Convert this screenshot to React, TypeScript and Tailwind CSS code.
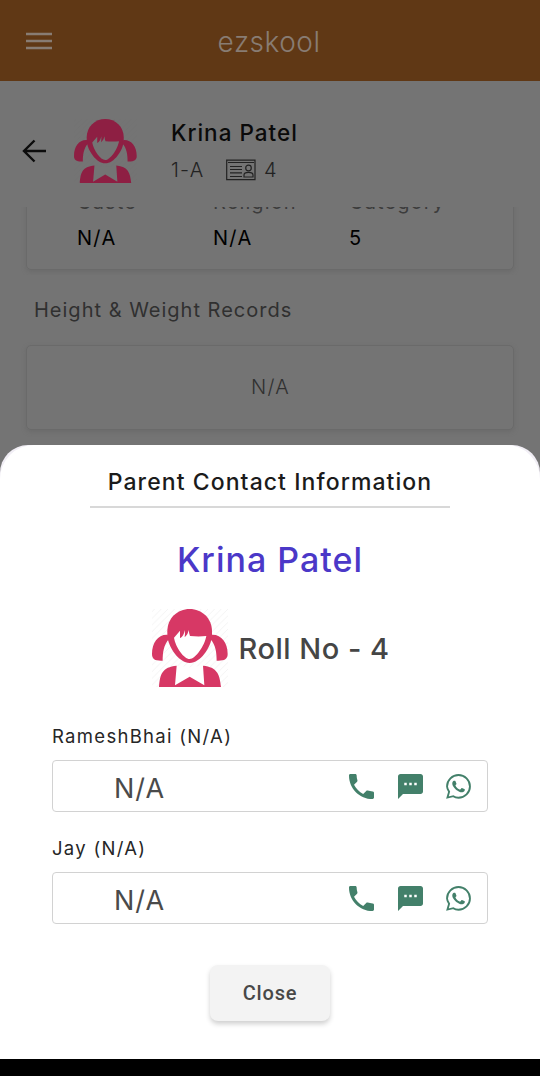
import React from "react";

function Girl({ className, color, paper, stripe }: { className: string; color: string; paper: string; stripe: string }) {
  const id = "hatch" + color.slice(1);
  return (
    <svg viewBox="35 237 228 234" preserveAspectRatio="none" className={className}>
      <defs>
        <pattern id={id} width="20" height="20" patternUnits="userSpaceOnUse">
          <path d="M0 20L20 0" stroke={stripe} strokeWidth="2.5" />
        </pattern>
      </defs>
      <rect x="35" y="237" width="228" height="234" fill={`url(#${id})`} />
      <path fill={color} d="M81 318V304C81 265 111 237 148 237S215 265 215 304V318C212 352 180 399 148 399S84 352 81 318Z" />
      <path fill={paper} d="M101 323L119 302L119 325C127 321 131 312 134 300C134 308 134 315 133 322C141 315 143 309 145 300C146 307 147 313 149 318C166 320 184 320 198 318C193 347 166 387 148 387C131 387 106 352 101 323Z" />
      <path fill={color} d="M82 314C54 312 35 337 35 372C35 388 45 393 67 392C67 368 70 344 86 327ZM214 314C242 312 262 337 262 372C262 388 251 393 229 392C229 368 226 344 210 327Z" />
      <path fill={paper} d="M109 407L104 466L148 440L192 466L188 407L148 412Z" />
      <path fill={color} d="M56 471C59 433 65 411 109 407L104 466L148 440L192 466L188 407C231 411 238 433 242 471Z" />
    </svg>
  );
}

function IdCard() {
  return (
    <svg viewBox="0 0 30 22" className="h-[22px] w-[30px]" fill="none" stroke="#222222" strokeWidth="1.2">
      <path d="M.7 1.2H29V20.600H.7ZM2 3.500H28M4 7.500H16M4 10.500H16M4 13.800H16M4 17.500H16" />
      <circle cx="22.5" cy="9" r="2.8" />
      <path d="M18 18V16C18 12.5 27 12.5 27 16V18Z" />
    </svg>
  );
}

function Contact({ name }: { name: string }) {
  return (
    <div className="h-[112px]">
      <div className="h-[24px] text-[18.5px] leading-[24px] tracking-[1.3px] text-[#262626]">{name}</div>
      <div className="mt-[12px] flex h-[52px] items-center rounded-[4px] border-[1.5px] border-[#d2d2d2] pr-[16px] pl-[61px]">
        <span className="flex-1 pt-[5px] text-[27px] leading-[32px] tracking-[1px] text-[#4a4a4a]">N/A</span>
        <svg viewBox="3 3 18 18" className="mr-[24px] h-[25px] w-[25px]" fill="#43806a">
          <path d="M6.62 10.79c1.44 2.83 3.76 5.14 6.59 6.59l2.2-2.2c.27-.27.67-.36 1.02-.24 1.12.37 2.33.57 3.57.57.55 0 1 .45 1 1V20c0 .55-.45 1-1 1-9.39 0-17-7.61-17-17 0-.55.45-1 1-1h3.5c.55 0 1 .45 1 1 0 1.25.2 2.45.57 3.57.11.35.03.74-.25 1.02z" />
        </svg>
        <svg viewBox="2 2 20 20" className="mr-[23px] h-[25px] w-[25px]" fill="#43806a">
          <path d="M20 2H4c-1.100 0-1.990.9-1.990 2L2 22l4-4h14c1.100 0 2-.9 2-2V4c0-1.100-.9-2-2-2zM9 11H7V9h2v2zm4 0h-2V9h2v2zm4 0h-2V9h2v2z" />
        </svg>
        <svg viewBox="0 0 24 24" className="h-[25px] w-[25px]" fill="none" stroke="#43806a" strokeWidth="1.8">
          <path d="M1.400 22.600L3 17C1.800 15 1 13.500 1 11.900C1 6 6 1 12 1S23 6 23 11.900S18 22.800 12 22.800C10 22.800 8.400 22.300 7 21.300Z" />
          <path stroke="none" fill="#43806a" d="M17.470 14.380c-.3-.15-1.760-.87-2.030-.97-.27-.1-.47-.15-.67.15-.2.3-.77.97-.94 1.160-.17.2-.35.22-.64.08-.3-.15-1.260-.46-2.390-1.480-.88-.79-1.480-1.760-1.650-2.060-.17-.3-.02-.46.13-.6.13-.14.3-.35.45-.52.15-.17.2-.3.3-.5.1-.2.050-.37-.03-.52-.07-.15-.67-1.610-.91-2.210-.24-.58-.49-.5-.67-.51h-.57c-.2 0-.52.07-.79.37-.27.3-1.040 1.020-1.040 2.480s1.070 2.880 1.210 3.070c.15.2 2.100 3.200 5.080 4.490.71.3 1.260.49 1.690.63.71.22 1.360.19 1.870.12.57-.09 1.760-.72 2.010-1.410.25-.7.25-1.290.17-1.410-.07-.13-.27-.2-.57-.35z" />
        </svg>
      </div>
    </div>
  );
}

export default function App() {
  return (
    <div className="flex h-[1076px] w-[540px] flex-col overflow-hidden bg-[#747474] font-['Inter','Noto_Sans',sans-serif]">
      <header className="grid h-[81px] shrink-0 grid-cols-[180px_1fr_180px] items-center bg-[#603815]">
        <svg viewBox="0 0 26 18" className="ml-[26px] h-[18px] w-[26px]" stroke="#887c73" strokeWidth="2.6">
          <path d="M0 2H26M0 9H26M0 16H26" />
        </svg>
        <h1 className="pt-[2px] pr-[2px] text-center text-[28px] font-light tracking-[0.5px] text-[#887c73]">ezskool</h1>
      </header>

      <section className="flex h-[126px] shrink-0 items-start">
        <svg viewBox="0 0 24 24" className="mt-[58px] ml-[22px] h-[24px] w-[24px]" fill="none" stroke="#0c0c0c" strokeWidth="2.4">
          <path d="M24 12H3M12.500 1.500L2 12L12.500 22.500" />
        </svg>
        <Girl className="mt-[38px] ml-[28px] h-[64px] w-[63px]" color="#8e1f43" paper="#747474" stripe="#717171" />
        <div className="mt-[38px] ml-[34px]">
          <div className="h-[28px] text-[22.5px] leading-[28px] font-medium tracking-[1px] text-[#0a0a0a]">Krina Patel</div>
          <div className="mt-[10px] flex h-[26px] items-center text-[20px] font-light text-[#222222]">
            <span className="w-[55px] tracking-[1.2px]">1-A</span>
            <IdCard />
            <span className="ml-[8px]">4</span>
          </div>
        </div>
      </section>

      <section className="h-[68px] shrink-0 overflow-hidden">
        <div className="mx-[26px] -mt-[20px] h-[83px] rounded-[5px] border border-[#6a6a6a] pl-[50px] shadow-[0_2px_4px_#66666699]">
          <div className="-mt-px grid h-[30px] grid-cols-[136px_136px_1fr] text-[20px] leading-[30px] tracking-[1.1px] text-[#3c3c3c]">
            <span>Caste</span><span>Religion</span><span>Category</span>
          </div>
          <div className="mt-[6px] grid h-[30px] grid-cols-[136px_136px_1fr] text-[20px] leading-[30px] tracking-[1.3px] text-black">
            <span>N/A</span><span>N/A</span><span>5</span>
          </div>
        </div>
      </section>

      <h2 className="mt-[20px] ml-[34px] h-[30px] shrink-0 text-[20px] leading-[30px] tracking-[1px] text-[#303030]">Height &amp; Weight Records</h2>
      <div className="mx-[26px] mt-[20px] flex h-[85px] shrink-0 items-center justify-center rounded-[5px] border border-[#6a6a6a] pb-[2px] pl-[1px] text-[20px] font-light tracking-[1.3px] text-[#303030] shadow-[0_2px_4px_#66666699]">N/A</div>

      <main className="mt-[15px] h-[614px] shrink-0 rounded-t-[28px] bg-[#f1eef5]">
        <div className="flex h-full flex-col items-center rounded-t-[34px] bg-white">
          <div className="h-[63px] w-[360px] border-b-2 border-[#d8d8d8] pt-[22px] text-center text-[23px] leading-[30px] font-medium tracking-[1.08px] whitespace-nowrap text-[#1b1b1b]">Parent Contact Information</div>
          <div className="mt-[32px] h-[40px] text-[34px] leading-[40px] font-medium tracking-[1px] text-[#4b38c8]">Krina Patel</div>
          <div className="mt-[29px] ml-[3px] flex h-[78px] w-[240px] items-center">
            <Girl className="h-[78px] w-[76px] shrink-0" color="#d73865" paper="#ffffff" stripe="#f1f1f1" />
            <div className="ml-[11px] pt-[2px] text-[29px] font-medium tracking-[0.5px] whitespace-nowrap text-[#454545]">Roll No - 4</div>
          </div>
          <div className="mt-[37px] w-[436px]">
            <Contact name="RameshBhai (N/A)" />
            <Contact name="Jay (N/A)" />
          </div>
          <button className="mt-[17px] h-[56px] w-[120px] rounded-[8px] bg-[#f3f3f3] font-['Roboto',sans-serif] text-[20px] font-medium tracking-[0.8px] text-[#484848] shadow-[0_3px_5px_#00000030]">Close</button>
        </div>
      </main>
      <div className="h-[17px] shrink-0 bg-black" />
    </div>
  );
}
